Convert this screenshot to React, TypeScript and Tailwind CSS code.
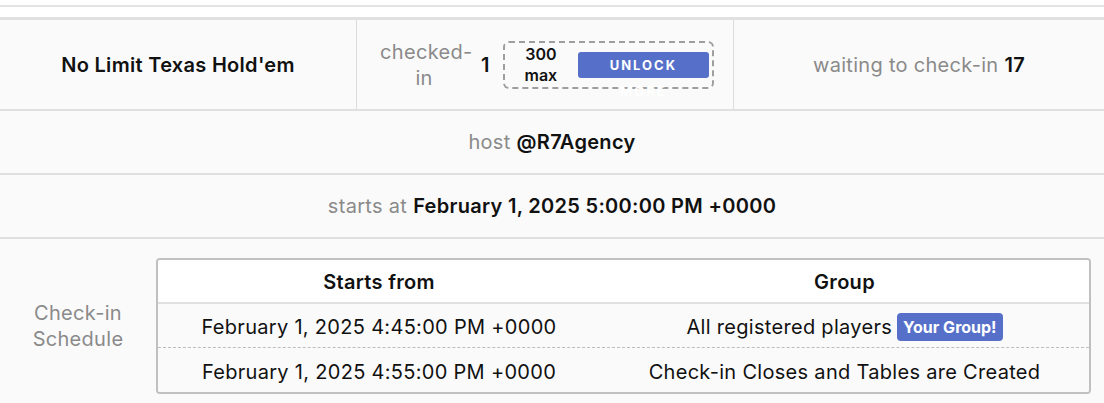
import React from 'react';

const schedule = [
  { start: 'February 1, 2025 4:45:00 PM +0000', group: 'All registered players', mine: true },
  { start: 'February 1, 2025 4:55:00 PM +0000', group: 'Check-in Closes and Tables are Created', mine: false },
];

export default function App() {
  return (
    <div className="min-h-screen bg-white text-[#111] font-['Inter',sans-serif] text-[20px] tracking-[0.3px]">
      <div className="h-[5px]" />
      <div className="h-[2px] bg-[#e3e3e3]" />
      <div className="h-[10px]" />
      <div className="border-t-[3px] border-[#e0e0e0] bg-[#fafafa]">
        {/* stats row */}
        <div className="flex h-[91px] border-b-2 border-[#e0e0e0]">
          <div className="w-[357px] flex items-center justify-center font-semibold border-r border-[#dcdcdc]">
            No Limit Texas Hold'em
          </div>
          <div className="w-[377px] flex items-center justify-center gap-[13px] pl-[4px] border-r border-[#dcdcdc]">
            <span className="w-[88px] text-center leading-[26px] text-[#8a8a8a]">checked-in</span>
            <span className="font-semibold">1</span>
            <div className="flex items-center h-[48px] w-[211px] rounded-[6px] border-2 border-dashed border-[#9e9e9e] pl-[15px] pr-[3px] gap-[16px]">
              <div className="w-[42px] text-center font-semibold text-[16px] leading-[21px] tracking-normal">
                300
                <br />
                max
              </div>
              <button className="h-[26px] w-[131px] rounded-[3px] bg-[#5670c9] text-white font-bold text-[13px] tracking-[2px] leading-[26px] text-center">
                UNLOCK
                <br />
                MORE
              </button>
            </div>
          </div>
          <div className="flex-1 flex items-center justify-center gap-[6px]">
            <span className="text-[#8a8a8a]">waiting to check-in</span>
            <span className="font-semibold">17</span>
          </div>
        </div>

        {/* host */}
        <div className="h-[64px] flex items-center justify-center gap-[6px] border-b-2 border-[#e0e0e0]">
          <span className="text-[#8a8a8a]">host</span>
          <span className="font-semibold">@R7Agency</span>
        </div>

        {/* start time */}
        <div className="h-[64px] flex items-center justify-center gap-[6px] border-b-2 border-[#e0e0e0]">
          <span className="text-[#8a8a8a]">starts at</span>
          <span className="font-semibold">February 1, 2025 5:00:00 PM +0000</span>
        </div>

        {/* schedule */}
        <div className="flex items-center pt-[19px] pb-[10px] pr-[13px]">
          <div className="w-[156px] text-center leading-[26px] text-[#8a8a8a]">
            Check-in
            <br />
            Schedule
          </div>
          <div className="flex-1 rounded-[4px] border-2 border-[#c0c0c0] overflow-hidden">
            <div className="grid grid-cols-[442px_1fr] h-[44px] pt-[2px] items-center bg-white border-b-2 border-[#e0e0e0] font-semibold">
              <div className="text-center">Starts from</div>
              <div className="text-center">Group</div>
            </div>
            {schedule.map((row, i) => (
              <div
                key={row.start}
                className={
                  'grid grid-cols-[442px_1fr] h-[44px] pt-[3px] items-center bg-[#fafafa] ' +
                  (i < schedule.length - 1 ? 'border-b border-dashed border-[#bdbdbd]' : '')
                }
              >
                <div className="text-center">{row.start}</div>
                <div className="flex items-center justify-center gap-[5px]">
                  <span>{row.group}</span>
                  {row.mine && (
                    <span className="rounded-[4px] bg-[#5670c9] px-[6px] py-[2px] text-[16px] font-bold text-white leading-[24px] tracking-normal">
                      Your Group!
                    </span>
                  )}
                </div>
              </div>
            ))}
          </div>
        </div>
      </div>
    </div>
  );
}
